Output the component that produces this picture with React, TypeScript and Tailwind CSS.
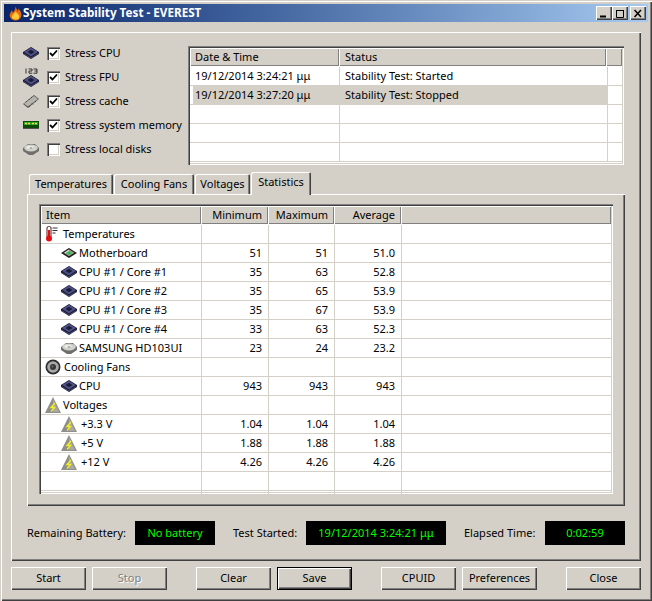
import type { ReactNode } from "react";

const raised = "shadow-[inset_1px_1px_0_#ffffff,inset_-1px_-1px_0_#404040,inset_-2px_-2px_0_#808080]";
const sunken = "shadow-[inset_1px_1px_0_#808080,inset_2px_2px_0_#404040,inset_-1px_-1px_0_#ffffff,inset_-2px_-2px_0_#d4d0c8]";

function Flame() {
  return (
    <svg width="13" height="15" viewBox="0 0 14 15">
      <path d="M7 0c1 3 2 3 2 5 1-1 1-2 1-3 3 3 4 6 3 9-1 3-4 4-6 4s-5-1-6-4C0 8 2 7 3 4c1 1 1 2 1 3 2-2 3-4 3-7z" fill="#e86a0c" />
      <path d="M7 5c1 2 4 3 4 6s-2 3-4 3-4-1-4-3 3-4 4-6z" fill="#ffc838" />
    </svg>
  );
}

function CpuShape() {
  return (
    <>
      <polygon points="8,0 16,5 16,7 8,12 0,7 0,5" fill="#17172c" />
      <polygon points="8,0.8 15,5 8,9.4 1,5" fill="#4e5288" />
      <polygon points="8,2.8 11.5,5 8,7.2 4.5,5" fill="#1c1c34" />
      <path d="M0.5 6.5L8 11l7.5-4.5" stroke="#6a6e9c" strokeWidth="0.6" fill="none" />
    </>
  );
}

function Cpu() {
  return (
    <svg width="16" height="12" viewBox="0 0 16 12" className="shrink-0">
      <CpuShape />
    </svg>
  );
}

function Fpu() {
  return (
    <svg width="16" height="19" viewBox="0 0 16 19">
      <path d="M3 0.5v5M5.5 1H9v2H6v2.2h3.3M10.5 1H14v4.2h-3.5M11.5 3H14" stroke="#222" strokeWidth="0.9" fill="none" />
      <g transform="translate(0 7)">
        <CpuShape />
      </g>
    </svg>
  );
}

function Cache() {
  return (
    <svg width="16" height="13" viewBox="0 0 16 13">
      <polygon points="11,0 16,4 5,13 0,9" fill="#55554f" />
      <polygon points="11,1 15,4 5,11.6 1,8.8" fill="#b4b4ac" />
      <path d="M3 6l1 1M5.5 4l1 1M8 2l1 1M6 11l1 1M9 8.5l1 1M12 6l1 1" stroke="#333" strokeWidth="0.8" />
    </svg>
  );
}

function Ram() {
  return (
    <svg width="16" height="8" viewBox="0 0 16 8">
      <rect width="16" height="7" fill="#0c4a0c" />
      <rect x="1" y="1" width="14" height="3" fill="#2ca02c" />
      <path d="M2 2.5h2M5 2.5h2M9 2.5h2M12 2.5h2" stroke="#e8e040" strokeWidth="1.6" />
      <path d="M0 7.5h16" stroke="#555" strokeWidth="1" />
    </svg>
  );
}

function Disk() {
  return (
    <svg width="16" height="11" viewBox="0 0 16 11" className="shrink-0">
      <polygon points="5,0 12,0 16,4 16,7 10,11 6,11 0,7 0,4" fill="#6e6e6a" />
      <ellipse cx="8" cy="4" rx="6.8" ry="3.4" fill="#d0d0cc" />
      <ellipse cx="7" cy="3.4" rx="3.5" ry="1.4" fill="#f0f0ec" />
      <ellipse cx="8" cy="4" rx="1.6" ry="0.8" fill="#90908c" />
    </svg>
  );
}

function Board() {
  return (
    <svg width="16" height="10" viewBox="0 0 16 10" className="shrink-0">
      <polygon points="8,0 16,5 8,10 0,5" fill="#1c1c1c" />
      <polygon points="8,1.2 13.5,4.8 8,8.2 2.5,4.8" fill="#9a9a92" />
      <path d="M4 5L8 2.4" stroke="#eeeeea" strokeWidth="1" />
      <polygon points="8,3.4 10.8,5 8,6.8 5.2,5" fill="#18c83c" />
    </svg>
  );
}

function Thermo() {
  return (
    <svg width="14" height="16" viewBox="0 0 14 16" className="shrink-0">
      <rect x="2" y="0.5" width="4" height="11" rx="1.5" fill="#fff" stroke="#501818" />
      <rect x="3" y="4" width="2" height="8" fill="#e01010" />
      <circle cx="4" cy="12.5" r="3" fill="#e01010" />
      <path d="M7.5 2h5M7.5 4.5h5M7.5 7h3" stroke="#333" strokeWidth="1" />
    </svg>
  );
}

function Fan() {
  return (
    <svg width="16" height="16" viewBox="0 0 16 16" className="shrink-0">
      <circle cx="8" cy="8" r="7.5" fill="#2c2c2c" />
      <circle cx="8" cy="8" r="5.8" fill="#a8a8a8" />
      <circle cx="8" cy="8" r="3" fill="#383838" />
      <circle cx="7.4" cy="7.4" r="1" fill="#707070" />
    </svg>
  );
}

function Volt() {
  return (
    <svg width="16" height="16" viewBox="0 0 16 16" className="shrink-0">
      <polygon points="8,0 16,16 0,16" fill="#8e8e8a" />
      <polygon points="8,2 14,15 8,15" fill="#a8a8a4" />
      <path d="M10 6L6 10.5h3.5l-3.5 4" stroke="#f4f020" strokeWidth="1.4" fill="none" />
    </svg>
  );
}

function Check({ on }: { on: boolean }) {
  return (
    <span className={`w-[13px] h-[13px] bg-white shrink-0 flex items-center justify-center ${sunken}`}>
      {on && (
        <svg width="9" height="9" viewBox="0 0 9 9">
          <path d="M1 4l2.5 2.5L8 1.5" stroke="#000" strokeWidth="1.8" fill="none" />
        </svg>
      )}
    </span>
  );
}

function StressRow({ icon, label, on }: { icon: ReactNode; label: string; on: boolean }) {
  return (
    <div className="h-[24px] flex items-center">
      <span className="w-[16px] flex justify-center">{icon}</span>
      <span className="ml-[8px]"><Check on={on} /></span>
      <span className="ml-[5px] whitespace-nowrap">{label}</span>
    </div>
  );
}

function HeadCell({ w, children, right, pad = "px-[6px]" }: { w: string; children?: ReactNode; right?: boolean; pad?: string }) {
  return (
    <div className={`${w} h-[18px] shrink-0 bg-[#d4d0c8] shadow-[inset_1px_1px_0_#ffffff,inset_-1px_-1px_0_#808080] flex items-center ${pad} ${right ? "justify-end" : ""}`}>
      {children}
    </div>
  );
}

const log = [
  ["19/12/2014 3:24:21 μμ", "Stability Test: Started", false],
  ["19/12/2014 3:27:20 μμ", "Stability Test: Stopped", true],
  ["", "", false],
  ["", "", false],
  ["", "", false],
] as const;

function LogList() {
  return (
    <div className={`w-[436px] h-[119px] p-[2px] bg-white overflow-hidden ${sunken}`}>
      <div className="flex">
        <HeadCell w="w-[149px]" pad="px-[5px]">Date &amp; Time</HeadCell>
        <HeadCell w="w-[267px]">Status</HeadCell>
        <HeadCell w="flex-1" />
      </div>
      <div className="h-[1px]" />
      {log.map((r, i) => (
        <div key={i} className="flex h-[19px] border-b border-[#d4d0c8]">
          <div className={`whitespace-nowrap leading-[18px] ${r[2] ? "w-[146px] ml-[3px] pl-[2px] bg-[#d4d0c8]" : "w-[149px] pl-[5px]"}`}>{r[0]}</div>
          <div className={`w-[268px] px-[5px] leading-[18px] whitespace-nowrap border-l border-[#d4d0c8] ${r[2] ? "bg-[#d4d0c8]" : ""}`}>{r[1]}</div>
          <div className="flex-1 border-l border-[#d4d0c8]" />
        </div>
      ))}
    </div>
  );
}

const stats: { icon: ReactNode; label: string; vals?: string[]; sub?: boolean; gap?: string }[] = [
  { icon: <Thermo />, label: "Temperatures", gap: "gap-[4px]" },
  { icon: <Board />, label: "Motherboard", vals: ["51", "51", "51.0"], sub: true },
  { icon: <Cpu />, label: "CPU #1 / Core #1", vals: ["35", "63", "52.8"], sub: true },
  { icon: <Cpu />, label: "CPU #1 / Core #2", vals: ["35", "65", "53.9"], sub: true },
  { icon: <Cpu />, label: "CPU #1 / Core #3", vals: ["35", "67", "53.9"], sub: true },
  { icon: <Cpu />, label: "CPU #1 / Core #4", vals: ["33", "63", "52.3"], sub: true },
  { icon: <Disk />, label: "SAMSUNG HD103UI", vals: ["23", "24", "23.2"], sub: true },
  { icon: <Fan />, label: "Cooling Fans", gap: "gap-[3px]" },
  { icon: <Cpu />, label: "CPU", vals: ["943", "943", "943"], sub: true },
  { icon: <Volt />, label: "Voltages" },
  { icon: <Volt />, label: "+3.3 V", vals: ["1.04", "1.04", "1.04"], sub: true, gap: "gap-[4px]" },
  { icon: <Volt />, label: "+5 V", vals: ["1.88", "1.88", "1.88"], sub: true, gap: "gap-[4px]" },
  { icon: <Volt />, label: "+12 V", vals: ["4.26", "4.26", "4.26"], sub: true, gap: "gap-[4px]" },
  { icon: null, label: "" },
];

function StatsList() {
  return (
    <div className={`h-[290px] p-[2px] bg-white overflow-hidden ${sunken}`}>
      <div className="flex">
        <HeadCell w="w-[160px]" pad="px-[5px]">Item</HeadCell>
        <HeadCell w="w-[67px]" right>Minimum</HeadCell>
        <HeadCell w="w-[66px]" right>Maximum</HeadCell>
        <HeadCell w="w-[67px]" right>Average</HeadCell>
        <HeadCell w="flex-1" />
      </div>
      <div className="h-[1px]" />
      {stats.map((r, i) => (
        <div key={i} className="flex h-[19px] border-b border-[#d4d0c8]">
          <div className={`w-[160px] flex items-center whitespace-nowrap ${r.gap ?? "gap-[2px]"} ${r.sub ? "pl-[20px]" : "pl-[4px]"}`}>
            {r.icon}
            <span>{r.label}</span>
          </div>
          {[0, 1, 2].map((c) => (
            <div key={c} className={`${c === 1 ? "w-[66px]" : "w-[67px]"} border-l border-[#d4d0c8] text-right pr-[6px] leading-[18px]`}>
              {r.vals?.[c]}
            </div>
          ))}
          <div className="flex-1 border-l border-[#d4d0c8]" />
        </div>
      ))}
      <div className="flex h-[3px]">
        <div className="w-[160px]" />
        <div className="w-[67px] border-l border-[#d4d0c8]" />
        <div className="w-[66px] border-l border-[#d4d0c8]" />
        <div className="w-[67px] border-l border-[#d4d0c8]" />
        <div className="flex-1 border-l border-[#d4d0c8]" />
      </div>
    </div>
  );
}

function Readout({ label, labelW, w, value }: { label: string; labelW: string; w: string; value: string }) {
  return (
    <div className="flex items-center gap-[8px]">
      <span className={`${labelW} whitespace-nowrap pt-[1px]`}>{label}</span>
      <span className={`${w} h-[24px] bg-black text-[#00ff00] flex items-center justify-center whitespace-nowrap`}>{value}</span>
    </div>
  );
}

function Btn({ children, disabled, isDefault, className = "" }: { children: string; disabled?: boolean; isDefault?: boolean; className?: string }) {
  return (
    <button
      className={`w-[75px] h-[23px] shrink-0 pb-[1px] ${isDefault ? "border border-black shadow-[inset_1px_1px_0_#ffffff,inset_-1px_-1px_0_#404040,inset_-2px_-2px_0_#808080]" : raised} ${disabled ? "text-[#808080] [text-shadow:1px_1px_0_#ffffff]" : ""} ${className}`}
    >
      {children}
    </button>
  );
}

function Tab({ w, active, children }: { w: string; active?: boolean; children: string }) {
  return (
    <div
      className={`${w} flex items-center justify-center rounded-t-[2px] bg-[#d4d0c8] shadow-[inset_1px_1px_0_#ffffff,inset_-1px_0_0_#404040,inset_-2px_0_0_#808080] ${active ? "h-[23px] pb-[2px] relative z-10 -mb-[1px]" : "h-[20px] mt-[2px] pt-[1px]"}`}
    >
      {children}
    </div>
  );
}

function WinBtn({ kind, className = "" }: { kind: "min" | "max" | "close"; className?: string }) {
  return (
    <span className={`w-[16px] h-[14px] bg-[#d4d0c8] flex items-center justify-center ${raised} ${className}`}>
      <svg width="10" height="9" viewBox="0 0 10 9">
        {kind === "min" && <path d="M1 7.5h6" stroke="#000" strokeWidth="2" />}
        {kind === "max" && <path d="M1 1.5h8M1.5 1v7.5h7V1" stroke="#000" strokeWidth="1" fill="none" />}
        {kind === "close" && <path d="M1.5 1l6.5 7M8 1L1.5 8" stroke="#000" strokeWidth="1.5" />}
      </svg>
    </span>
  );
}

export default function App() {
  return (
    <div className="w-[652px] h-[601px] bg-[#d4d0c8] text-black text-[11px] font-['Noto_Sans','DejaVu_Sans',sans-serif] pt-[4px] px-[4px] shadow-[inset_1px_1px_0_#d4d0c8,inset_2px_2px_0_#ffffff,inset_-1px_-1px_0_#404040,inset_-2px_-2px_0_#808080] overflow-hidden">
      {/* Title bar */}
      <div className="h-[18px] flex items-center pl-[5px] pr-[2px] bg-gradient-to-r from-[#0a246a] to-[#a6caf0]">
        <Flame />
        <span className="ml-[1px] text-white font-bold text-[11.7px] whitespace-nowrap">System Stability Test - EVEREST</span>
        <div className="ml-auto flex">
          <WinBtn kind="min" />
          <WinBtn kind="max" />
          <WinBtn kind="close" className="ml-[2px]" />
        </div>
      </div>

      <div className="px-[7px] pt-[10px]">
        <div className={`h-[529px] pl-[12px] pr-[12px] pt-[14px] ${raised}`}>
          <div className="flex justify-between pr-[5px] h-[119px]">
            <div className="-mt-[5px]">
              <StressRow icon={<Cpu />} label="Stress CPU" on />
              <StressRow icon={<Fpu />} label="Stress FPU" on />
              <StressRow icon={<Cache />} label="Stress cache" on />
              <StressRow icon={<Ram />} label="Stress system memory" on />
              <StressRow icon={<Disk />} label="Stress local disks" on={false} />
            </div>
            <LogList />
          </div>

          <div className="mx-[4px] mt-[7px]">
            <div className="flex h-[22px] pl-[2px] gap-[1px]">
              <Tab w="w-[84px]">Temperatures</Tab>
              <Tab w="w-[80px]">Cooling Fans</Tab>
              <Tab w="w-[55px]">Voltages</Tab>
              <Tab w="w-[60px]" active>Statistics</Tab>
            </div>
            <div className={`h-[312px] px-[12px] pt-[10px] ${raised}`}>
              <StatsList />
            </div>
            <div className="flex justify-between mt-[15px]">
              <Readout label="Remaining Battery:" labelW="w-[100px]" w="w-[80px]" value="No battery" />
              <Readout label="Test Started:" labelW="w-[65px]" w="w-[140px]" value="19/12/2014 3:24:21 μμ" />
              <Readout label="Elapsed Time:" labelW="w-[73px]" w="w-[80px]" value="0:02:59" />
            </div>
          </div>
        </div>

        <div className="flex mt-[6px]">
          <Btn>Start</Btn>
          <Btn disabled className="ml-[6px]">Stop</Btn>
          <Btn className="ml-[29px]">Clear</Btn>
          <Btn isDefault className="ml-[6px]">Save</Btn>
          <Btn className="ml-[29px]">CPUID</Btn>
          <Btn className="ml-[6px]">Preferences</Btn>
          <Btn className="ml-[29px]">Close</Btn>
        </div>
      </div>
    </div>
  );
}
